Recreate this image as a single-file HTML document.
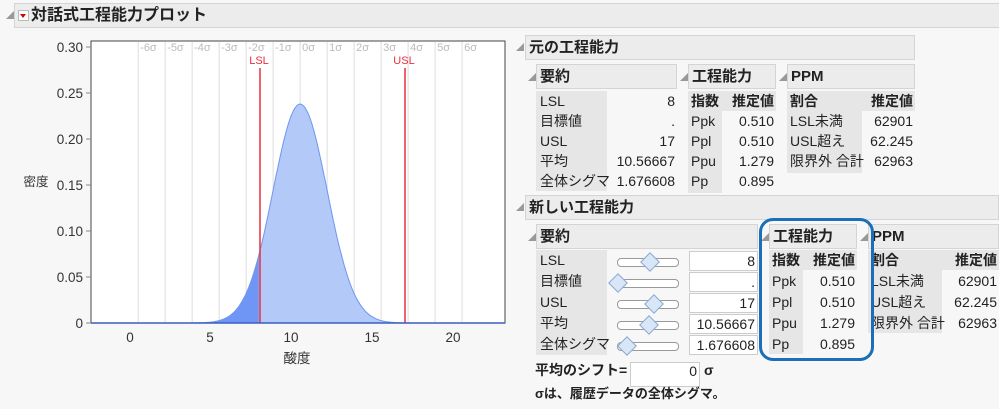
<!DOCTYPE html>
<html><head><meta charset="utf-8">
<style>
body{margin:0;width:999px;height:409px;background:#f7f7f7;font-family:"Liberation Sans","Noto Sans CJK JP",sans-serif;position:relative;overflow:hidden;color:#222}
.a{position:absolute}
.hdr{position:absolute;background:#ececec;border:1px solid #d4d4d4;font-weight:bold;font-size:15px;line-height:24px;padding-left:3px;box-sizing:border-box}
.tri{position:absolute;font-size:8px;color:#999}
.t{position:absolute;font-size:14px;line-height:20px}
.g{position:absolute;background:#e6e6e6}
.r{text-align:right}
.inp{position:absolute;background:#fff;border:1px solid #ccc;box-sizing:border-box;font-size:14px;text-align:right;line-height:19px;padding-right:2px}
.sl{position:absolute;width:60px;height:7px;border:1px solid #999;border-radius:4px;background:#fff}
.dm{position:absolute;width:12px;height:12px;transform:rotate(45deg);background:#d8e6f7;border:1px solid #8aa8d0}
</style></head><body>
<div class="hdr" style="left:14px;top:3px;width:990px;height:25px;font-size:16px;padding-left:16px">対話式工程能力プロット</div>
<div class="tri" style="left:6px;top:10px">◢</div>
<div class="a" style="left:18px;top:10px;width:9px;height:9px;background:#fff;border:1px solid #bbb"><div style="margin:3px 1px;width:0;height:0;border-left:3.5px solid transparent;border-right:3.5px solid transparent;border-top:4px solid #d00"></div></div>

<svg class="a" style="left:0;top:0" width="520" height="409" font-family="Liberation Sans, Noto Sans CJK JP, sans-serif">
<rect x="91" y="41" width="414" height="282" fill="#fff" stroke="#444" stroke-width="1"/>
<g id="sg" stroke="#ddd" stroke-width="1"></g>
<path id="cv" fill="#b3c9f7" stroke="#6e96ee" stroke-width="1"/>
<path id="cvl" fill="#6f96f5"/>
<g id="sl" font-size="11" fill="#bbb"></g>
<line x1="260" y1="68" x2="260" y2="323" stroke="#e8303c" stroke-width="1.5"/>
<line x1="405" y1="68" x2="405" y2="323" stroke="#e8303c" stroke-width="1.5"/>
<text x="259" y="64" font-size="11" fill="#e8303c" text-anchor="middle">LSL</text>
<text x="404" y="64" font-size="11" fill="#e8303c" text-anchor="middle">USL</text>
<line x1="91" y1="323" x2="505" y2="323" stroke="#3a5fbf" stroke-width="1.5"/>
<g font-size="13.5" fill="#333" text-anchor="end">
<text x="83" y="52">0.30</text><text x="83" y="98">0.25</text><text x="83" y="144">0.20</text>
<text x="83" y="190">0.15</text><text x="83" y="236">0.10</text><text x="83" y="282">0.05</text><text x="83" y="328">0</text>
</g>
<g stroke="#888"><line x1="86" y1="47" x2="91" y2="47"/><line x1="86" y1="93" x2="91" y2="93"/><line x1="86" y1="139" x2="91" y2="139"/><line x1="86" y1="185" x2="91" y2="185"/><line x1="86" y1="231" x2="91" y2="231"/><line x1="86" y1="277" x2="91" y2="277"/><line x1="86" y1="323" x2="91" y2="323"/></g>
<g font-size="13.5" fill="#333" text-anchor="middle">
<text x="130" y="342">0</text><text x="210" y="342">5</text><text x="291" y="342">10</text><text x="372" y="342">15</text><text x="453" y="342">20</text>
<text x="297" y="363">酸度</text><text x="36" y="186" font-size="12.5">密度</text>
</g>
</svg>
<script>
(function(){
var x0=130,px=16.1,mu=10.56667,sd=1.676608,y0=323,py=920;
var X=function(v){return x0+v*px},Y=function(d){return y0-d*py};
var f=function(v){return Math.exp(-0.5*Math.pow((v-mu)/sd,2))/(sd*Math.sqrt(2*Math.PI))};
var lo=(91-x0)/px,hi=(505-x0)/px,d="M"+X(lo)+","+y0,dl="M"+X(lo)+","+y0;
for(var v=lo;v<=hi;v+=0.05){d+=" L"+X(v).toFixed(1)+","+Y(f(v)).toFixed(1);if(v<=8)dl+=" L"+X(v).toFixed(1)+","+Y(f(v)).toFixed(1);}
d+=" L"+X(hi)+","+y0+" Z";dl+=" L"+X(8)+","+Y(f(8))+" L"+X(8)+","+y0+" Z";
document.getElementById("cv").setAttribute("d",d);document.getElementById("cvl").setAttribute("d",dl);
var g=document.getElementById("sg"),s=document.getElementById("sl"),ns="http://www.w3.org/2000/svg";
for(var k=-6;k<=6;k++){var x=X(mu+k*sd);var l=document.createElementNS(ns,"line");l.setAttribute("x1",x);l.setAttribute("x2",x);l.setAttribute("y1",42);l.setAttribute("y2",323);g.appendChild(l);
var t=document.createElementNS(ns,"text");t.setAttribute("x",x+2);t.setAttribute("y",51);t.textContent=(k<0?"-"+(-k):k)+"σ";s.appendChild(t);}
})();
</script>

<!-- 元の工程能力 -->
<div class="tri" style="left:516px;top:42px">◢</div>
<div class="hdr" style="left:525px;top:35px;width:390px;height:25px">元の工程能力</div>
<div class="tri" style="left:528px;top:72px">◢</div><div class="hdr" style="left:536px;top:64px;width:141px;height:25px">要約</div>
<div class="tri" style="left:680px;top:72px">◢</div><div class="hdr" style="left:688px;top:64px;width:88px;height:25px">工程能力</div>
<div class="tri" style="left:779px;top:72px">◢</div><div class="hdr" style="left:787px;top:64px;width:128px;height:25px">PPM</div>
<div class="g" style="left:536px;top:91px;width:71px;height:100px"></div>
<div class="t" style="left:540px;top:91px">LSL<br>目標値<br>USL<br>平均<br>全体シグマ</div>
<div class="t r" style="left:600px;top:91px;width:75px">8<br>.<br>17<br>10.56667<br>1.676608</div>
<div class="g" style="left:688px;top:91px;width:88px;height:20px"></div>
<div class="g" style="left:688px;top:111px;width:34px;height:82px"></div>
<div class="t" style="left:691px;top:91px;font-weight:bold">指数<br><span style="font-weight:normal">Ppk<br>Ppl<br>Ppu<br>Pp</span></div>
<div class="t r" style="left:722px;top:91px;width:52px"><b>推定値</b><br>0.510<br>0.510<br>1.279<br>0.895</div>
<div class="g" style="left:787px;top:91px;width:128px;height:20px"></div>
<div class="g" style="left:787px;top:111px;width:75px;height:62px"></div>
<div class="t" style="left:790px;top:91px"><b>割合</b><br>LSL未満<br>USL超え<br>限界外 合計</div>
<div class="t r" style="left:862px;top:91px;width:51px"><b>推定値</b><br>62901<br>62.245<br>62963</div>

<!-- 新しい工程能力 -->
<div class="tri" style="left:516px;top:202px">◢</div>
<div class="hdr" style="left:525px;top:195px;width:474px;height:25px">新しい工程能力</div>
<div class="tri" style="left:528px;top:232px">◢</div><div class="hdr" style="left:536px;top:224px;width:222px;height:25px">要約</div>
<div class="tri" style="left:761px;top:232px">◢</div><div class="hdr" style="left:769px;top:224px;width:88px;height:25px">工程能力</div>
<div class="tri" style="left:860px;top:232px">◢</div><div class="hdr" style="left:868px;top:224px;width:131px;height:25px">PPM</div>
<div class="g" style="left:536px;top:250px;width:71px;height:105px"></div>
<div class="t" style="left:540px;top:250px;line-height:21px">LSL<br>目標値<br>USL<br>平均<br>全体シグマ</div>
<div class="sl" style="left:617px;top:258px"></div><div class="dm" style="left:643px;top:255px"></div>
<div class="sl" style="left:617px;top:279px"></div><div class="dm" style="left:611px;top:276px"></div>
<div class="sl" style="left:617px;top:300px"></div><div class="dm" style="left:647px;top:297px"></div>
<div class="sl" style="left:617px;top:321px"></div><div class="dm" style="left:642px;top:318px"></div>
<div class="sl" style="left:617px;top:342px"></div><div class="dm" style="left:620px;top:339px"></div>
<div class="inp" style="left:689px;top:251px;width:69px;height:20px">8</div>
<div class="inp" style="left:689px;top:272px;width:69px;height:20px">.</div>
<div class="inp" style="left:689px;top:293px;width:69px;height:20px">17</div>
<div class="inp" style="left:689px;top:314px;width:69px;height:20px">10.56667</div>
<div class="inp" style="left:689px;top:335px;width:69px;height:20px">1.676608</div>
<div class="g" style="left:769px;top:250px;width:88px;height:20px"></div>
<div class="g" style="left:769px;top:270px;width:34px;height:84px"></div>
<div class="t" style="left:772px;top:250px;line-height:21px;font-weight:bold">指数<br><span style="font-weight:normal">Ppk<br>Ppl<br>Ppu<br>Pp</span></div>
<div class="t r" style="left:803px;top:250px;width:52px;line-height:21px"><b>推定値</b><br>0.510<br>0.510<br>1.279<br>0.895</div>
<div class="g" style="left:868px;top:250px;width:131px;height:20px"></div>
<div class="g" style="left:868px;top:270px;width:74px;height:63px"></div>
<div class="t" style="left:871px;top:250px;line-height:21px"><b>割合</b><br>LSL未満<br>USL超え<br>限界外 合計</div>
<div class="t r" style="left:942px;top:250px;width:55px;line-height:21px"><b>推定値</b><br>62901<br>62.245<br>62963</div>
<div class="a" style="left:759px;top:218px;width:115px;height:143px;border:3px solid #1b6fb8;border-radius:14px;box-sizing:border-box"></div>

<div class="t" style="left:535px;top:360px;font-weight:bold">平均のシフト=</div>
<div class="inp" style="left:630px;top:362px;width:70px;height:25px;line-height:16px">0</div>
<div class="t" style="left:704px;top:360px;font-weight:bold">σ</div>
<div class="t" style="left:535px;top:384px;font-weight:bold;font-size:13px">σは、履歴データの全体シグマ。</div>
</body></html>
